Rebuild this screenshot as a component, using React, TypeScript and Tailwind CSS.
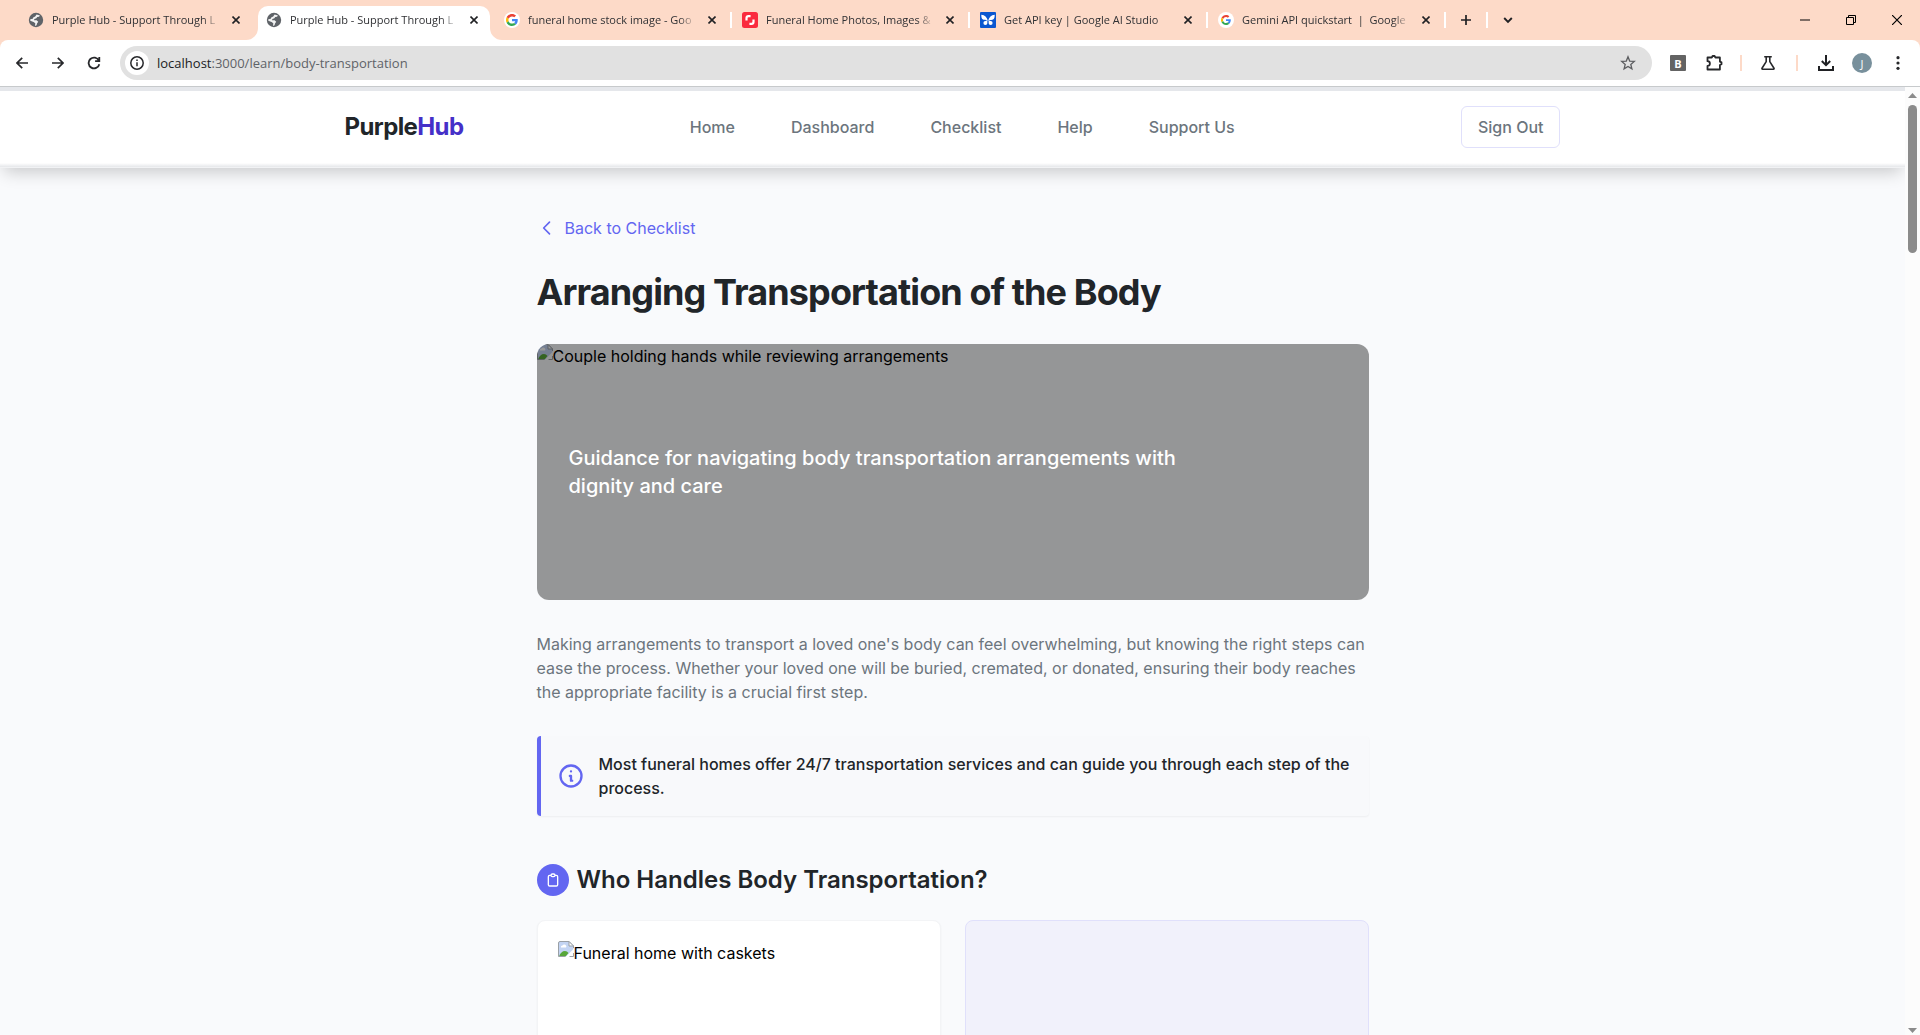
import type { ReactNode } from "react";

function GoogleMark({ size }: { size: number }) {
  return (
    <svg width={size} height={size} viewBox="0 0 48 48">
      <path fill="#EA4335" d="M24 9.5c3.54 0 6.71 1.22 9.21 3.6l6.85-6.85C35.9 2.38 30.47 0 24 0 14.62 0 6.51 5.38 2.56 13.22l7.98 6.19C12.43 13.72 17.74 9.5 24 9.5z" />
      <path fill="#4285F4" d="M46.98 24.55c0-1.57-.15-3.09-.38-4.55H24v9.02h12.94c-.58 2.96-2.26 5.48-4.78 7.18l7.73 6c4.51-4.18 7.09-10.36 7.09-17.65z" />
      <path fill="#FBBC05" d="M10.53 28.59c-.48-1.45-.76-2.99-.76-4.59s.27-3.14.76-4.59l-7.98-6.19C.92 16.46 0 20.12 0 24c0 3.88.92 7.54 2.56 10.78l7.97-6.19z" />
      <path fill="#34A853" d="M24 48c6.48 0 11.93-2.13 15.89-5.81l-7.73-6c-2.15 1.45-4.92 2.3-8.16 2.3-6.26 0-11.57-4.22-13.47-9.91l-7.98 6.19C6.51 42.62 14.62 48 24 48z" />
    </svg>
  );
}

function GoogleFavicon({ size }: { size: number }) {
  return (
    <span className="flex size-4 items-center justify-center rounded-full bg-white">
      <GoogleMark size={size} />
    </span>
  );
}

function GlobeFavicon() {
  return (
    <svg width="16" height="16" viewBox="0 0 16 16">
      <circle cx="8" cy="8" r="7.2" fill="#5f6368" />
      <path d="M8.6 2.4 12 3.4 11 4.8 9.200 4.900 8.400 6.300 6.400 6.900 6 8.200 8.600 8.300 10.200 9.800 9 11.400 8.600 13.200 7 13.900 7.300 11.200 5.600 10 2.300 8.700 2.300 7.200 4.800 6.800 5.200 5.400 7.200 4.600Z" fill="#fff" opacity=".92" />
    </svg>
  );
}

function ShutterFavicon() {
  return (
    <svg width="16" height="16" viewBox="0 0 16 16">
      <rect width="16" height="16" rx="2.5" fill="#fa2b3e" />
      <path d="M8.6 3H6.4C4.6 3 3.4 4.2 3.4 6v2.6H5.6V6.2c0-.6.3-.9.9-.9H8.6Z" fill="#fff" />
      <path d="M7.4 13H9.6c1.8 0 3-1.2 3-3V7.4H10.4V9.8c0 .6-.3.9-.9.9H7.4Z" fill="#fff" />
    </svg>
  );
}

function ButterflyFavicon() {
  return (
    <svg width="16" height="16" viewBox="0 0 16 16">
      <rect width="16" height="16" rx="1" fill="#0b57d0" />
      <g fill="#fff">
        <path d="M7.700 8.200C6.800 5.400 5 3.200 1.300 2.800 1.300 5 1.500 6.400 2.600 7.300 3.800 8.300 5.600 7.900 7.700 8.200Z" />
        <path d="M8.300 8.200C9.200 5.400 11 3.200 14.700 2.800 14.700 5 14.500 6.400 13.400 7.300 12.200 8.300 10.400 7.900 8.300 8.200Z" />
        <circle cx="5.400" cy="11" r="2" />
        <circle cx="10.600" cy="11" r="2" />
        <path d="M7.600 8 5 9.200 7 11.400ZM8.400 8 11 9.200 9 11.400Z" />
      </g>
    </svg>
  );
}

type Tab = { title: string; icon: ReactNode; active?: boolean; separator?: boolean };

const tabs: Tab[] = [
  { title: "Purple Hub - Support Through L", icon: <GlobeFavicon /> },
  { title: "Purple Hub - Support Through L", icon: <GlobeFavicon />, active: true },
  { title: "funeral home stock image - Goo", icon: <GoogleFavicon size={12} />, separator: true },
  { title: "Funeral Home Photos, Images &", icon: <ShutterFavicon />, separator: true },
  { title: "Get API key | Google AI Studio", icon: <ButterflyFavicon />, separator: true },
  { title: "Gemini API quickstart  |  Google", icon: <GoogleFavicon size={10} />, separator: true },
];

function BrowserTab({ title, icon, active, separator }: Tab) {
  return (
    <div className="relative flex h-full w-[238px] min-w-0 items-center pl-[10px]">
      {active && (
        <div className="absolute top-[6px] right-1 bottom-0 left-[2px] rounded-t-[10px] bg-white">
          <svg className="absolute bottom-0 -left-3" width="12" height="12" viewBox="0 0 12 12">
            <path d="M12 0V12H0A12 12 0 0 0 12 0Z" fill="#fff" />
          </svg>
          <svg className="absolute -right-3 bottom-0" width="12" height="12" viewBox="0 0 12 12">
            <path d="M0 0V12H12A12 12 0 0 1 0 0Z" fill="#fff" />
          </svg>
        </div>
      )}
      <span className="relative flex size-4 shrink-0">{icon}</span>
      <span className="relative ml-2 w-[168px] overflow-hidden mask-r-from-90% mask-r-to-100% text-[11px] leading-5 whitespace-pre text-[#303134]">
        {title}
      </span>
      <button aria-label="Close tab" className="relative ml-2 flex size-4 items-center justify-center">
        <svg width="8" height="8" viewBox="0 0 8 8" stroke="#202124" strokeWidth="1.6">
          <path d="M.5.5 7.5 7.5M7.500.5.5 7.500" />
        </svg>
      </button>
      {separator && <span className="ml-auto h-4 w-[2px] shrink-0 bg-white" />}
    </div>
  );
}

function TabStrip() {
  return (
    <div className="flex h-10 items-center bg-[#fddac8] pl-[18px]">
      {tabs.map((tab, i) => (
        <BrowserTab key={i} {...tab} />
      ))}
      <button aria-label="New tab" className="flex h-10 w-10 items-center justify-center">
        <svg width="10" height="10" viewBox="0 0 10 10" stroke="#202124" strokeWidth="1.700">
          <path d="M5 0V10M0 5H10" />
        </svg>
      </button>
      <span className="h-4 w-[2px] bg-white" />
      <button aria-label="Search tabs" className="flex h-10 w-10 items-center justify-center">
        <svg width="10" height="8" viewBox="0 0 10 8" fill="none" stroke="#202124" strokeWidth="1.900">
          <path d="M1.200 2 5 5.800 8.800 2" />
        </svg>
      </button>
      <div className="ml-auto flex">
        <button aria-label="Minimize" className="flex h-10 w-[46px] items-center justify-center">
          <span className="h-[2px] w-[10px] bg-[#7f6e66]" />
        </button>
        <button aria-label="Restore" className="flex h-10 w-[46px] items-center justify-center">
          <svg width="10" height="10" viewBox="0 0 10 10" fill="none" stroke="#000">
            <path d="M.5 2.500H7.500V9.500H.5ZM2.500 2.500V.5H9.500V7.500H7.500" />
          </svg>
        </button>
        <button aria-label="Close window" className="flex h-10 w-[46px] items-center justify-center">
          <svg width="10" height="10" viewBox="0 0 10 10" stroke="#000" strokeWidth="1.200">
            <path d="M0 0 10 10M10 0 0 10" />
          </svg>
        </button>
      </div>
    </div>
  );
}

function Toolbar() {
  return (
    <div className="bg-[#fddac8]">
      <div className="flex h-[47px] items-center rounded-t-lg border-b border-[#c7cacc] bg-white px-1">
        <button aria-label="Back" className="flex size-9 items-center justify-center">
          <svg width="12" height="12" viewBox="0 0 12 12" fill="none" stroke="#27282b" strokeWidth="1.700">
            <path d="M12 6H1.200M6.200.8 1 6 6.200 11.200" />
          </svg>
        </button>
        <button aria-label="Forward" className="flex size-9 items-center justify-center">
          <svg width="12" height="12" viewBox="0 0 12 12" fill="none" stroke="#27282b" strokeWidth="1.700">
            <path d="M0 6H10.800M5.800.8 11 6 5.800 11.200" />
          </svg>
        </button>
        <button aria-label="Reload" className="flex size-9 items-center justify-center">
          <svg width="14" height="14" viewBox="0 0 14 14" fill="none" stroke="#27282b" strokeWidth="1.800">
            <path d="M11.900 4.600A5.400 5.400 0 1 0 12.300 8.200M12.300 1V5.200H8.100" />
          </svg>
        </button>
        <div className="ml-2 flex h-[34px] flex-1 items-center rounded-full bg-[#e1e1e1] pr-[14px] pl-[5px]">
          <button aria-label="Site information" className="flex size-6 items-center justify-center rounded-full bg-white">
            <svg width="14" height="14" viewBox="0 0 14 14" fill="none" stroke="#27282b" strokeWidth="1.500">
              <circle cx="7" cy="7" r="6.200" />
              <path d="M7 6.200V10.200M7 3.600V5.100" />
            </svg>
          </button>
          <div className="ml-2 text-[13px] leading-5 text-[#5f6368]">
            <span className="text-[#202124]">localhost</span>:3000/learn/body-transportation
          </div>
          <button aria-label="Bookmark this tab" className="ml-auto flex size-5 items-center justify-center">
            <svg width="16" height="16" viewBox="0 0 16 16" fill="none" stroke="#5c5d60" strokeWidth="1.300">
              <path d="M8 1.800 9.700 6.100 14.300 6.400 10.800 9.400 11.900 13.900 8 11.400 4.100 13.900 5.200 9.400 1.700 6.400 6.300 6.100Z" />
            </svg>
          </button>
        </div>
        <button aria-label="Extension B" className="ml-[18px] flex size-4 items-center justify-center rounded-[1px] bg-[#636363] text-[11px] leading-none font-bold text-white">
          B
        </button>
        <button aria-label="Extensions" className="ml-[18px] flex size-5 items-center justify-center">
          <svg width="18" height="18" viewBox="0 0 18 18" fill="none" stroke="#27282b" strokeWidth="1.800" strokeLinejoin="round">
            <path d="M2.500 3.500H6.800L7.600 2H9.600L10.400 3.500H14.900V7.600L16.500 8.400V10.200L14.900 11V15.500H2.500V12A2.400 2.400 0 0 0 2.500 7.200Z" />
          </svg>
        </button>
        <span className="ml-4 h-4 w-[2px] bg-[#fddac8]" />
        <button aria-label="Experiments" className="ml-4 flex size-5 items-center justify-center">
          <svg width="16" height="16" viewBox="0 0 16 16" fill="none" stroke="#27282b" strokeWidth="1.600" strokeLinejoin="round">
            <path d="M4.200 1.800H11.800M6.200 1.800V6.600L2 13.200Q1.600 14.200 2.600 14.200H13.400Q14.400 14.200 14 13.200L9.800 6.600V1.800" />
          </svg>
        </button>
        <span className="ml-[18px] h-4 w-[2px] bg-[#fddac8]" />
        <button aria-label="Downloads" className="ml-[18px] flex size-5 items-center justify-center">
          <svg width="16" height="16" viewBox="0 0 16 16" fill="none" stroke="#202124" strokeWidth="2">
            <path d="M8 0V10M3.800 6 8 10.200 12.200 6M1 11V15H15V11" />
          </svg>
        </button>
        <button aria-label="Profile" className="ml-4 flex size-5 items-center justify-center rounded-full bg-[#78909c] text-[11px] leading-none text-white">
          J
        </button>
        <button aria-label="Menu" className="mr-[9px] ml-[17px] flex size-[18px] items-center justify-center">
          <svg width="4" height="14" viewBox="0 0 4 14" fill="#27282b">
            <circle cx="2" cy="1.700" r="1.600" />
            <circle cx="2" cy="7" r="1.600" />
            <circle cx="2" cy="12.300" r="1.600" />
          </svg>
        </button>
      </div>
    </div>
  );
}

function BrokenImage({ alt }: { alt: string }) {
  return (
    <div className="flex text-base text-black">
      <svg className="shrink-0" width="16" height="16" viewBox="0 0 16 16">
        <path d="M.5 15V2Q.5.5 2 .5H11L15.500 5V8L8 15.500H.5Z" fill="#c3d4f3" />
        <path d="M3 6.500a1.500 1.500 0 0 1 1.500-2 2 2 0 0 1 3.500 0 1.500 1.500 0 0 1 0 2Z" fill="#fff" />
        <path d="M1 15.500Q3 10 7 10Q9 10 10.500 12L7.500 15.500Z" fill="#57a639" />
        <path d="M.5 15.500V2Q.5.5 2 .5H11L15.500 5V7" fill="none" stroke="#9aa0a6" />
        <path d="M11 .5V5H15.500Z" fill="#fff" stroke="#9aa0a6" />
        <path d="M.5 15.500H7M11.500 15.500H15.500V12" fill="none" stroke="#9aa0a6" />
      </svg>
      <span>{alt}</span>
    </div>
  );
}

function SiteHeader() {
  const links = ["Home", "Dashboard", "Checklist", "Help", "Support Us"];
  return (
    <header className="relative z-10 border-t-4 border-[#e5e7eb] bg-white shadow-[0_8px_16px_-4px_rgba(0,0,0,0.2)]">
      <div className="mx-auto flex h-[72px] max-w-7xl items-center justify-between px-8">
        <a href="#" className="text-2xl font-bold tracking-tight text-[#212529]">
          Purple<span className="text-[#4530c8]">Hub</span>
        </a>
        <nav className="flex gap-14">
          {links.map((link) => (
            <a key={link} href="#" className="font-medium text-[#6c757d]">
              {link}
            </a>
          ))}
        </nav>
        <button className="rounded-md border border-[#e0e0fb] px-4 py-2 font-medium text-[#6c757d]">Sign Out</button>
      </div>
      <div className="h-[5px] border-b border-[#f1f2f4] bg-linear-to-b from-white to-[#e5e7ea]" />
    </header>
  );
}

function Article() {
  return (
    <main className="mx-auto max-w-4xl px-8 pt-12">
      <a href="#" className="flex items-center text-[#6366f1]">
        <svg className="mr-2" width="20" height="20" viewBox="0 0 24 24" fill="none" stroke="#6366f1" strokeWidth="2" strokeLinecap="round" strokeLinejoin="round">
          <path d="M15 19l-7-7 7-7" />
        </svg>
        Back to Checklist
      </a>
      <h1 className="mt-8 text-4xl font-bold tracking-tight text-[#212529]">Arranging Transportation of the Body</h1>
      <div className="relative mt-8 h-64 overflow-hidden rounded-xl">
        <BrokenImage alt="Couple holding hands while reviewing arrangements" />
        <div className="absolute inset-0 flex items-center bg-black/40 px-8">
          <p className="max-w-2xl text-xl font-medium text-white">
            Guidance for navigating body transportation arrangements with dignity and care
          </p>
        </div>
      </div>
      <p className="mt-8 text-[#6c757d]">
        Making arrangements to transport a loved one's body can feel overwhelming, but knowing the right steps can ease
        the process. Whether your loved one will be buried, cremated, or donated, ensuring their body reaches the
        appropriate facility is a crucial first step.
      </p>
      <div className="mt-8 flex items-center gap-3.5 rounded border-l-4 border-[#6366f1] bg-[#f8f9fb] p-4 shadow-[0_1px_2px_0_rgba(0,0,0,0.05)]">
        <svg className="shrink-0" width="28" height="28" viewBox="0 0 24 24" fill="none" stroke="#6366f1" strokeWidth="2" strokeLinecap="round" strokeLinejoin="round">
          <path d="M13 16h-1v-4h-1m1-4h.01M21 12a9 9 0 11-18 0 9 9 0 0118 0z" />
        </svg>
        <p className="font-medium text-[#212529]">
          Most funeral homes offer 24/7 transportation services and can guide you through each step of the process.
        </p>
      </div>
      <h2 className="mt-12 flex items-center gap-2 text-2xl font-semibold text-[#212529]">
        <span className="flex size-8 items-center justify-center rounded-full bg-[#6366f1]">
          <svg width="16" height="16" viewBox="0 0 24 24" fill="none" stroke="#fff" strokeWidth="2" strokeLinecap="round" strokeLinejoin="round">
            <path d="M9 5H7a2 2 0 00-2 2v12a2 2 0 002 2h10a2 2 0 002-2V7a2 2 0 00-2-2h-2M9 5a2 2 0 002 2h2a2 2 0 002-2M9 5a2 2 0 012-2h2a2 2 0 012 2" />
          </svg>
        </span>
        Who Handles Body Transportation?
      </h2>
      <div className="mt-6 grid grid-cols-2 gap-6">
        <section className="h-80 rounded-lg border border-[#f3f4f6] bg-white p-5 shadow-[0_1px_2px_0_rgba(0,0,0,0.05)]">
          <BrokenImage alt="Funeral home with caskets" />
        </section>
        <section className="h-80 rounded-lg border border-[#e0e0fb] bg-[#f1f1fb]" />
      </div>
    </main>
  );
}

function Scrollbar() {
  return (
    <div className="flex w-[15px] shrink-0 flex-col items-center bg-[#fcfcfc] pt-[6px] pb-[2px]">
      <svg width="9" height="5" viewBox="0 0 9 5" fill="#8b8b8b">
        <path d="M0 5 4.500 0 9 5Z" />
      </svg>
      <div className="mt-[7px] h-[148px] w-[9px] rounded-full bg-[#8b8b8b]" />
      <svg className="mt-auto" width="9" height="5" viewBox="0 0 9 5" fill="#8b8b8b">
        <path d="M0 0H9L4.500 5Z" />
      </svg>
    </div>
  );
}

export default function App() {
  return (
    <div className="flex h-screen flex-col overflow-hidden bg-[#f9fafc]">
      <div className="shrink-0 font-['Open_Sans',sans-serif]">
        <TabStrip />
        <Toolbar />
      </div>
      <div className="flex min-h-0 flex-1">
        <div className="min-w-0 flex-1 overflow-hidden font-[Inter,sans-serif]">
          <SiteHeader />
          <Article />
        </div>
        <Scrollbar />
      </div>
    </div>
  );
}
